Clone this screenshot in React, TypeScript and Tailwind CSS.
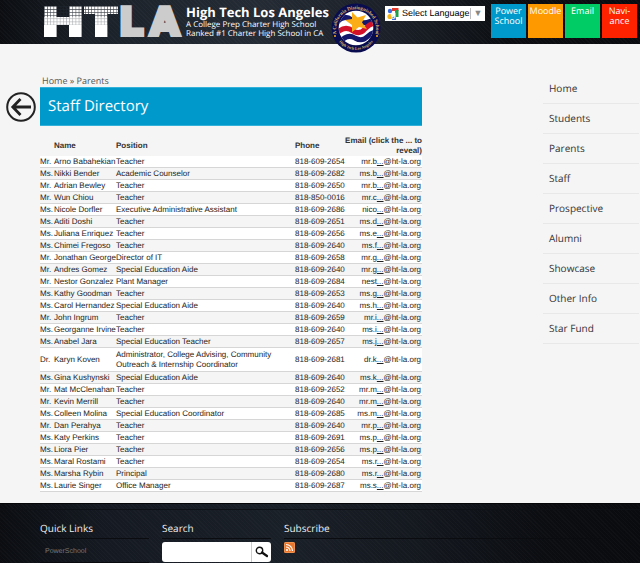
import React from "react";

type Person = { title: string; name: string; position: string; phone: string; email: string };

const p = (title: string, name: string, position: string, phone: string, email: string): Person => ({
  title,
  name,
  position,
  phone,
  email,
});

const staff: Person[] = [
  p("Mr.", "Arno Babahekian", "Teacher", "818-609-2654", "mr.b"),
  p("Ms.", "Nikki Bender", "Academic Counselor", "818-609-2682", "ms.b"),
  p("Mr.", "Adrian Bewley", "Teacher", "818-609-2650", "mr.b"),
  p("Mr.", "Wun Chiou", "Teacher", "818-850-0016", "mr.c"),
  p("Ms.", "Nicole Dorfler", "Executive Administrative Assistant", "818-609-2686", "nico"),
  p("Ms.", "Aditi Doshi", "Teacher", "818-609-2651", "ms.d"),
  p("Ms.", "Juliana Enriquez", "Teacher", "818-609-2656", "ms.e"),
  p("Ms.", "Chimei Fregoso", "Teacher", "818-609-2640", "ms.f"),
  p("Mr.", "Jonathan George", "Director of IT", "818-609-2658", "mr.g"),
  p("Mr.", "Andres Gomez", "Special Education Aide", "818-609-2640", "mr.g"),
  p("Mr.", "Nestor Gonzalez", "Plant Manager", "818-609-2684", "nest"),
  p("Ms.", "Kathy Goodman", "Teacher", "818-609-2653", "ms.g"),
  p("Ms.", "Carol Hernandez", "Special Education Aide", "818-609-2640", "ms.h"),
  p("Mr.", "John Ingrum", "Teacher", "818-609-2659", "mr.i"),
  p("Ms.", "Georganne Irvine", "Teacher", "818-609-2640", "ms.i"),
  p("Ms.", "Anabel Jara", "Special Education Teacher", "818-609-2657", "ms.j"),
  p("Dr.", "Karyn Koven", "Administrator, College Advising, Community Outreach & Internship Coordinator", "818-609-2681", "dr.k"),
  p("Ms.", "Gina Kushynski", "Special Education Aide", "818-609-2640", "ms.k"),
  p("Mr.", "Mat McClenahan", "Teacher", "818-609-2652", "mr.m"),
  p("Mr.", "Kevin Merrill", "Teacher", "818-609-2640", "mr.m"),
  p("Ms.", "Colleen Molina", "Special Education Coordinator", "818-609-2685", "ms.m"),
  p("Mr.", "Dan Perahya", "Teacher", "818-609-2640", "mr.p"),
  p("Ms.", "Katy Perkins", "Teacher", "818-609-2691", "ms.p"),
  p("Ms.", "Liora Pier", "Teacher", "818-609-2656", "ms.p"),
  p("Ms.", "Maral Rostami", "Teacher", "818-609-2654", "ms.r"),
  p("Ms.", "Marsha Rybin", "Principal", "818-609-2680", "ms.r"),
  p("Ms.", "Laurie Singer", "Office Manager", "818-609-2687", "ms.s"),
];

const menu = ["Home", "Students", "Parents", "Staff", "Prospective", "Alumni", "Showcase", "Other Info", "Star Fund"];

const tiles = [
  { label: "Power School", color: "bg-[#0099cc]" },
  { label: "Moodle", color: "bg-[#ff9900]" },
  { label: "Email", color: "bg-[#00cc66]" },
  { label: "Navi-ance", color: "bg-[#ff2200]" },
];

function Logo() {
  return (
    <svg width="140" height="32" viewBox="0 0 140 32" className="shrink-0 overflow-visible" role="img" aria-label="HTLA">
      <defs>
        <pattern id="mesh" width="3.15" height="3.1" patternUnits="userSpaceOnUse">
          <path d="M0 0H3.15M0 0V3.1" stroke="#20262e" strokeWidth="1.2" />
        </pattern>
      </defs>
      <g fill="#fff">
        <rect x="0" y="0" width="12.6" height="31" />
        <rect x="25" y="0" width="12.6" height="31" />
        <rect x="12" y="11" width="14" height="8" />
        <rect x="40" y="0" width="34" height="8" />
        <rect x="51" y="0" width="12.4" height="31" />
      </g>
      <rect x="0" y="0" width="75" height="11" fill="url(#mesh)" opacity="0.85" />
      <rect x="0" y="11" width="75" height="8" fill="url(#mesh)" opacity="0.4" />
      <g
        fill="#cccccc"
        stroke="#cccccc"
        strokeWidth="4"
        fontFamily="'DejaVu Sans', sans-serif"
        fontWeight="700"
        fontSize="38"
      >
        <text x="75" y="29">L</text>
        <text x="106" y="29">A</text>
      </g>
    </svg>
  );
}

function Seal() {
  return (
    <svg width="50" height="52" viewBox="0 0 50 52" role="img" aria-label="California Distinguished School">
      <defs>
        <clipPath id="disc">
          <circle cx="25" cy="26" r="17.3" />
        </clipPath>
        <path id="arcTop" d="M5.6 32A20 20 0 1 1 44.4 32" />
        <path id="arcBottom" d="M6 37A22 22 0 0 0 44 37" />
      </defs>
      <circle cx="25" cy="26" r="24.5" fill="#0a0c50" />
      <g clipPath="url(#disc)" fill="none" strokeWidth="5">
        <rect width="50" height="52" fill="#fff" />
        <path d="M6 20Q13 12 21 18T43 18" stroke="#14176b" />
        <path d="M6 31Q14 23 22 29Q29 33 34 27T45 21" stroke="#d3122a" />
        <path d="M8 41Q16 31 24 36Q31 40 36 35T46 30" stroke="#14176b" />
      </g>
      <path d="M21 10L26.500 15.500L35 13L31 20.500L36 27L28 25L21 30L21 23L14 18L21 17Z" fill="#fbad18" />
      <g fill="#d8b46a" fontFamily="'Liberation Serif', serif" fontWeight="700">
        <text fontSize="5">
          <textPath href="#arcTop" startOffset="50%" textAnchor="middle">A California Distinguished School</textPath>
        </text>
        <text fontSize="4">
          <textPath href="#arcBottom" startOffset="50%" textAnchor="middle">High Tech Los Angeles</textPath>
        </text>
      </g>
      <circle cx="4" cy="34" r="1" fill="#fbad18" />
      <circle cx="46" cy="34" r="1" fill="#fbad18" />
    </svg>
  );
}

function LanguagePicker() {
  return (
    <div className="mt-1.5 flex h-[15px] w-[100px] shrink-0 items-center bg-white pl-0.5 font-['Liberation_Sans',Arial,sans-serif]">
      <svg width="12" height="12" viewBox="0 0 12 12" className="shrink-0" aria-hidden="true">
        <rect x="5" y="0" width="6.500" height="3" fill="#e23b2e" />
        <rect x="8" y="2" width="3.500" height="7" fill="#1f9d48" />
        <rect x="5" y="8" width="4" height="4" fill="#3a6ee0" />
        <circle cx="3" cy="3" r="2.200" fill="#3a6ee0" />
        <circle cx="3" cy="8.500" r="2.600" fill="#f4b619" />
        <text x="4" y="9" fontSize="8" fontWeight="700" fill="#fff" fontFamily="'Liberation Sans', sans-serif">g</text>
      </svg>
      <select
        aria-label="Select Language"
        className="ml-[3px] h-[15px] min-w-0 flex-1 appearance-none bg-transparent p-0 text-[9px] leading-[15px] text-black outline-none [text-rendering:geometricPrecision]"
      >
        <option>Select Language</option>
      </select>
      <span className="pointer-events-none flex h-[11px] w-[15px] items-center justify-center border-l border-[#bbbbbb] text-[9px] text-[#888888]">
        ▼
      </span>
    </div>
  );
}

const weave =
  "bg-[repeating-linear-gradient(45deg,rgba(255,255,255,0.025)_0_1px,transparent_1px_3px),linear-gradient(90deg,#0b0d11_0%,#1b2129_14%,#252b34_40%,#1b2028_62%,#0b0d11_80%,#090b0e_100%)]";
const footWeave =
  "bg-[repeating-linear-gradient(45deg,rgba(255,255,255,0.02)_0_1px,transparent_1px_3px),linear-gradient(90deg,#0b0d11_0%,#151a22_16%,#1a2028_45%,#14181f_65%,#0b0d11_85%,#090b0e_100%)]";

function Header() {
  return (
    <header className={`flex h-11 items-start pl-11 pr-[3px] text-white ${weave}`}>
      <a href="#" className="mt-1.5 block shrink-0">
        <Logo />
      </a>
      <div className="ml-0.5 mt-1 shrink-0 whitespace-nowrap">
        <h1 className="text-[13px] leading-[16px] font-bold">High Tech Los Angeles</h1>
        <p className="text-[8px] leading-[9px]">A College Prep Charter High School</p>
        <p className="text-[8px] leading-[9px]">Ranked #1 Charter High School in CA</p>
      </div>
      <div className="ml-0.5 mt-0.5 w-[50px] shrink-0">
        <Seal />
      </div>
      <div className="ml-auto flex shrink-0 items-start gap-1.5">
        <LanguagePicker />
        <nav aria-label="Services" className="mt-1 flex gap-0.5">
          {tiles.map((t) => (
            <a
              key={t.label}
              href="#"
              className={`h-[34px] w-[35px] pt-0.5 text-center text-[9px] leading-[10px] font-medium text-white ${t.color}`}
            >
              {t.label}
            </a>
          ))}
        </nav>
      </div>
    </header>
  );
}

function StaffTable() {
  return (
    <table className="mt-2.5 w-full table-fixed border-collapse font-['Liberation_Sans',Arial,sans-serif] text-[8px] leading-[10px] text-[#222222]">
      <colgroup>
        <col className="w-[14px]" />
        <col className="w-[62px]" />
        <col />
        <col className="w-[50px]" />
        <col className="w-[77px]" />
      </colgroup>
      <thead>
        <tr className="text-left text-[#333333]">
          <th className="p-0" aria-label="Title" />
          <th className="p-0">Name</th>
          <th className="p-0">Position</th>
          <th className="p-0">Phone</th>
          <th className="p-0 text-right">Email (click the ... to reveal)</th>
        </tr>
      </thead>
      <tbody>
        {staff.map((s) => (
          <tr key={s.name} className="border-b border-[#d6d6d6] odd:bg-white">
            <td className="p-0 pt-px whitespace-nowrap">{s.title}</td>
            <td className="p-0 pt-px whitespace-nowrap">{s.name}</td>
            <td className={s.position.length > 50 ? "p-0 pt-0.5 pr-4 pb-px" : "p-0 pt-px pr-4"}>{s.position}</td>
            <td className="p-0 pt-px whitespace-nowrap">{s.phone}</td>
            <td className="p-0 pt-px pr-px text-right whitespace-nowrap">
              {s.email}
              <a href="#" className="underline">...</a>@ht-la.org
            </td>
          </tr>
        ))}
      </tbody>
    </table>
  );
}

function FooterHeading({ children }: { children: React.ReactNode }) {
  return (
    <h3 className="border-b border-[#0a0c10] pb-0.5 text-[10px] leading-[16px] text-[#eeeeee]">{children}</h3>
  );
}

function Footer() {
  return (
    <footer className={`border-t border-[#050608] ${footWeave}`}>
      <div className="h-1.5 border-b border-[#0d1014]" />
      <div className="grid grid-cols-[109px_109px_1fr] gap-[13px] px-10 pt-2.5 pb-px">
        <section>
          <FooterHeading>Quick Links</FooterHeading>
          <a
            href="#"
            className="mt-2 block border-b border-[#07090c] pb-1.5 pl-[5px] font-['Liberation_Sans',Arial,sans-serif] text-[7px] leading-[9px] text-[#777777]"
          >
            PowerSchool
          </a>
        </section>
        <section>
          <FooterHeading>Search</FooterHeading>
          <form className="mt-[3px] flex h-5 overflow-hidden rounded-[3px] bg-white">
            <input type="text" aria-label="Search" className="min-w-0 flex-1 px-1 text-[9px] text-black outline-none" />
            <button
              type="button"
              aria-label="Go"
              className="flex w-5 items-center justify-center border-l border-[#cccccc]"
            >
              <svg width="14" height="12" viewBox="0 0 14 12" fill="none" stroke="#111">
                <circle cx="4.500" cy="4.500" r="3.200" strokeWidth="1.400" />
                <path d="M7 6.500L12 10" strokeWidth="2.200" strokeLinecap="round" />
              </svg>
            </button>
          </form>
        </section>
        <section>
          <FooterHeading>Subscribe</FooterHeading>
          <a href="#" aria-label="RSS feed" className="mt-[3px] block w-[11px]">
            <svg width="11" height="11" viewBox="0 0 11 11">
              <rect width="11" height="11" rx="1.500" fill="#e8762c" />
              <rect x="0.500" y="0.500" width="10" height="10" rx="1" fill="none" stroke="#f6a868" strokeWidth="0.600" />
              <circle cx="3" cy="8" r="1.100" fill="#fff" />
              <path d="M2 5A4 4 0 0 1 6 9M2 2.500A6.500 6.500 0 0 1 8.500 9" fill="none" stroke="#fff" strokeWidth="1.200" />
            </svg>
          </a>
        </section>
      </div>
    </footer>
  );
}

export default function App() {
  return (
    <div className="min-h-screen bg-[#f5f5f5] font-['Open_Sans','Noto_Sans',sans-serif] text-[#333333] [text-rendering:geometricPrecision]">
      <Header />
      <div className="flex items-start pb-[11px]">
        <a href="#" aria-label="Back" className="ml-1.5 mt-12 block w-[34px] shrink-0">
          <svg width="30" height="30" viewBox="0 0 30 30" fill="none" stroke="#222">
            <circle cx="15" cy="15" r="13.800" strokeWidth="2" />
            <path d="M25 15H7M14.500 7L6.800 15L14.500 23" strokeWidth="2.800" />
          </svg>
        </a>
        <main className="min-w-0 flex-1 pt-[30px]">
          <nav aria-label="Breadcrumb" className="pl-0.5 text-[9px] leading-[13px] text-[#555555]">
            <a href="#">Home</a> » <a href="#">Parents</a>
          </nav>
          <h2 className="flex h-[39px] items-center border-y border-[#33b1d9] bg-[#0099cc] pl-2 text-[15px] text-white">
            Staff Directory
          </h2>
          <StaffTable />
        </main>
        <nav aria-label="Main" className="ml-[121px] mr-px mt-[30px] w-24 shrink-0">
          <ul>
            {menu.map((m) => (
              <li key={m} className="border-b border-[#e8e8e8]">
                <a href="#" className="block pl-1.5 text-[10px] leading-[29px]">
                  {m}
                </a>
              </li>
            ))}
          </ul>
        </nav>
      </div>
      <Footer />
    </div>
  );
}
